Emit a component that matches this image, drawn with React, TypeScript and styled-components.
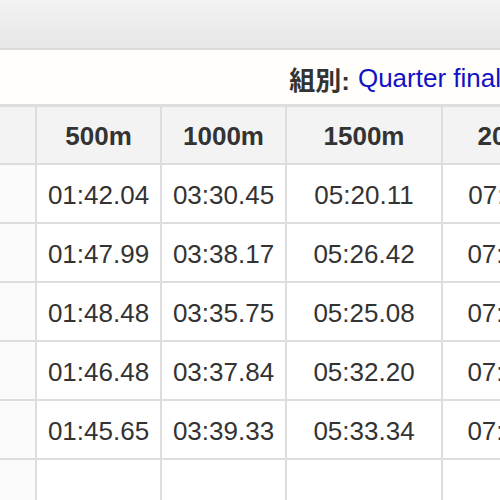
import React from "react";
import styled, { createGlobalStyle } from "styled-components";

const Global = createGlobalStyle`
  html, body {
    margin: 0;
    padding: 0;
    overflow: hidden;
    background: #ffffff;
  }
  body {
    font-family: "Liberation Sans", Arial, "Noto Sans CJK JP", sans-serif;
    color: #333333;
  }
`;

const Page = styled.div`
  width: 500px;
  height: 500px;
  overflow: hidden;
  display: flex;
  flex-direction: column;
`;

const TopBar = styled.div`
  flex: none;
  height: 48px;
  background: linear-gradient(#f2f2f2, #e7e7e7);
  border-bottom: 2px solid #dadada;
`;

const InfoBar = styled.div`
  flex: none;
  height: 54px;
  background: #fffefa;
  display: flex;
  align-items: center;
  justify-content: flex-end;
  font-size: 26px;
  white-space: nowrap;
  padding-top: 2px;
  box-sizing: border-box;
`;

const Label = styled.span`
  font-weight: bold;
  color: #333333;
  font-family: "Liberation Sans", Arial, "Noto Sans CJK JP", sans-serif;
`;

const Value = styled.span`
  color: #1212c4;
  margin-left: 8px;
  margin-right: -1px;
`;

const Grid = styled.div`
  flex: none;
  display: grid;
  grid-template-columns: 35px 123px 123px 154px 150px;
  grid-auto-rows: 57px;
  grid-template-rows: 56px;
  gap: 2px;
  background: #dddddd;
  border-top: 3px solid #dddddd;
  width: max-content;
`;

const Cell = styled.div<{ $head?: boolean; $side?: boolean }>`
  display: flex;
  align-items: center;
  justify-content: center;
  box-sizing: border-box;
  padding-top: 3px;
  font-size: 26px;
  white-space: nowrap;
  overflow: hidden;
  font-weight: ${(p) => (p.$head ? "bold" : "normal")};
  background: ${(p) => (p.$head ? "#f3f3f3" : p.$side ? "#fbfbfb" : "#ffffff")};
  color: #333333;
`;

const heads = ["500m", "1000m", "1500m", "2000m"];
const rows = [
  ["01:42.04", "03:30.45", "05:20.11", "07:11.20"],
  ["01:47.99", "03:38.17", "05:26.42", "07:15.33"],
  ["01:48.48", "03:35.75", "05:25.08", "07:16.54"],
  ["01:46.48", "03:37.84", "05:32.20", "07:22.10"],
  ["01:45.65", "03:39.33", "05:33.34", "07:24.87"],
  ["", "", "", ""],
];

export default function App() {
  return (
    <>
      <Global />
      <Page>
        <TopBar />
        <InfoBar>
          <Label>組別:</Label>
          <Value>Quarter final</Value>
        </InfoBar>
        <Grid>
          <Cell $head />
          {heads.map((h) => (
            <Cell $head key={h}>
              {h}
            </Cell>
          ))}
          {rows.map((r, i) => (
            <React.Fragment key={i}>
              <Cell $side />
              {r.map((v, j) => (
                <Cell key={j}>{v}</Cell>
              ))}
            </React.Fragment>
          ))}
        </Grid>
      </Page>
    </>
  );
}
